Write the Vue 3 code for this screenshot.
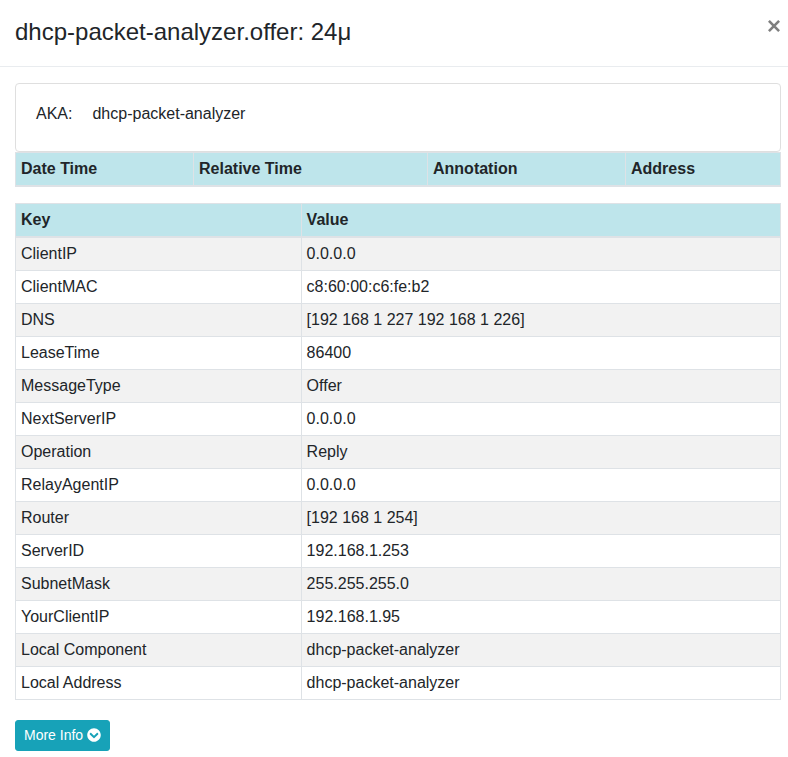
<script setup>
const eventColumns = ['Date Time', 'Relative Time', 'Annotation', 'Address']
const attributes = [
  ['ClientIP', '0.0.0.0'],
  ['ClientMAC', 'c8:60:00:c6:fe:b2'],
  ['DNS', '[192 168 1 227 192 168 1 226]'],
  ['LeaseTime', '86400'],
  ['MessageType', 'Offer'],
  ['NextServerIP', '0.0.0.0'],
  ['Operation', 'Reply'],
  ['RelayAgentIP', '0.0.0.0'],
  ['Router', '[192 168 1 254]'],
  ['ServerID', '192.168.1.253'],
  ['SubnetMask', '255.255.255.0'],
  ['YourClientIP', '192.168.1.95'],
  ['Local Component', 'dhcp-packet-analyzer'],
  ['Local Address', 'dhcp-packet-analyzer'],
]
</script>

<template>
  <div class="dialog">
    <header class="header">
      <h4 class="title">dhcp-packet-analyzer.offer: 24μ</h4>
      <button type="button" class="close" aria-label="Close">
        <svg width="12" height="12" viewBox="0 0 12 12" aria-hidden="true">
          <path d="M0.9 0.9L11.1 11.1M11.1 0.9L0.9 11.1" fill="none" stroke="currentColor" stroke-width="2.6" />
        </svg>
      </button>
    </header>
    <main class="body">
      <dl class="card">
        <dt>AKA:</dt>
        <dd>dhcp-packet-analyzer</dd>
      </dl>
      <table class="table events">
        <colgroup>
          <col class="date">
          <col class="relative">
          <col class="annotation">
          <col class="address">
        </colgroup>
        <thead>
          <tr>
            <th v-for="name in eventColumns" :key="name" scope="col">{{ name }}</th>
          </tr>
        </thead>
      </table>
      <table class="table">
        <thead>
          <tr>
            <th scope="col">Key</th>
            <th scope="col">Value</th>
          </tr>
        </thead>
        <tbody>
          <tr v-for="[key, value] in attributes" :key="key">
            <td>{{ key }}</td>
            <td>{{ value }}</td>
          </tr>
        </tbody>
      </table>
      <button type="button" class="more">
        More Info
        <svg class="chevron" width="14" height="14" viewBox="0 0 512 512" aria-hidden="true">
          <path fill="currentColor" d="M504 256c0 137-111 248-248 248S8 393 8 256 119 8 256 8s248 111 248 248zM273 369.9l135.5-135.5c9.4-9.4 9.4-24.6 0-33.9l-17-17c-9.4-9.4-24.6-9.4-33.9 0L256 285.1 154.4 183.5c-9.4-9.4-24.6-9.4-33.9 0l-17 17c-9.4 9.4-9.4 24.6 0 33.9L239 369.9c9.4 9.4 24.6 9.4 34 0z" />
        </svg>
      </button>
    </main>
  </div>
</template>

<style>
body {
  margin: 0;
  background: #fff;
}
</style>

<style scoped>
.dialog {
  color: #212529;
  font-family: "Liberation Sans", Arial, sans-serif;
  font-size: 16px;
  line-height: 24px;
}
.header {
  display: flex;
  align-items: flex-start;
  justify-content: space-between;
  padding: 14px 8px 16px 15px;
  border-bottom: 1px solid #e9ecef;
}
.title {
  margin: 0;
  font-size: 24px;
  font-weight: 400;
  line-height: 36px;
}
.close {
  display: flex;
  padding: 6px 0;
  border: 0;
  background: none;
  color: #7f7f7f;
  cursor: pointer;
}
.body {
  padding: 16px 7px 6px 15px;
}
.card {
  display: flex;
  gap: 20px;
  margin: 0;
  padding: 18px 20px 25px;
  border: 1px solid #dfdfdf;
  border-radius: 4px;
}
.card dd {
  margin: 0;
}
.table {
  width: 100%;
  margin-bottom: 16px;
  border: 1px solid #dee2e6;
  border-collapse: collapse;
}
.table th,
.table td {
  padding: 4px 5px;
  border: 1px solid #dee2e6;
  text-align: left;
  vertical-align: top;
}
.table th {
  border-bottom-width: 2px;
  background: #bee5eb;
}
.table tbody tr:nth-child(odd) {
  background: #f2f2f2;
}
.events {
  table-layout: fixed;
}
.date {
  width: 178px;
}
.relative {
  width: 234px;
}
.annotation {
  width: 198px;
}
.address {
  width: 155px;
}
.more {
  display: block;
  margin-top: 20px;
  padding: 4px 8px;
  border: 1px solid #17a2b8;
  border-radius: 3px;
  background: #17a2b8;
  color: #fff;
  font-family: inherit;
  font-size: 14px;
  line-height: 21px;
  cursor: pointer;
}
.chevron {
  vertical-align: -2px;
}
</style>
